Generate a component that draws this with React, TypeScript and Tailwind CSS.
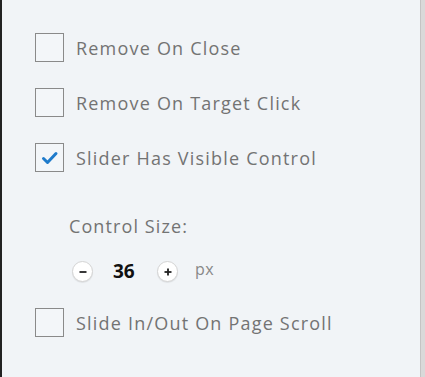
import { useState } from "react";

function Checkbox({ label, checked }: { label: string; checked?: boolean }) {
  return (
    <label className="flex items-center gap-[12px] h-[29px]">
      <span className="w-[29px] h-[29px] shrink-0 border-[1.5px] border-[#8a8a8a] bg-[#f3f6f9] flex items-center justify-center">
        {checked && (
          <svg width="18" height="16" viewBox="0 0 18 16">
            <path d="M2.5 8.5 L6.5 12.5 L15 3.5" fill="none" stroke="#1f7bcb" strokeWidth="3" strokeLinecap="round" strokeLinejoin="round" />
          </svg>
        )}
      </span>
      <span className="text-[18px] font-medium text-[#737373] tracking-[1.2px] leading-[24px]">{label}</span>
    </label>
  );
}

function RoundButton({ sign }: { sign: "-" | "+" }) {
  return (
    <button className="w-[21px] h-[21px] rounded-full bg-white border border-[#d4d4d4] shadow-[0_1px_1px_rgba(0,0,0,0.08)] flex items-center justify-center">
      <svg width="10" height="10" viewBox="0 0 10 10">
        <path d="M1.5 5 H8.5" stroke="#222" strokeWidth="1.8" />
        {sign === "+" && <path d="M5 1.5 V8.5" stroke="#222" strokeWidth="1.8" />}
      </svg>
    </button>
  );
}

export default function App() {
  const [size] = useState(36);
  return (
    <div className="w-[425px] h-[377px] flex bg-[#d9d9d9]" style={{ fontFamily: "'Open Sans', 'Liberation Sans', sans-serif" }}>
      <div className="w-[421px] h-full bg-[#f1f4f7] border-l-2 border-[#222] border-r border-r-[#c4c4c4] pl-[33px] pt-[33px] flex flex-col">
        <div className="flex flex-col gap-[26px]">
          <Checkbox label="Remove On Close" />
          <Checkbox label="Remove On Target Click" />
          <Checkbox label="Slider Has Visible Control" checked />
        </div>

        <div className="pl-[34px] mt-[44px] text-[18px] font-medium text-[#737373] tracking-[1.1px] leading-[20px]">Control Size:</div>

        <div className="pl-[37px] mt-[25px] flex items-center h-[21px]">
          <RoundButton sign="-" />
          <span className="ml-[20px] w-[27px] text-[19px] font-bold text-[#111] leading-[21px]">{size}</span>
          <span className="ml-[17px]"><RoundButton sign="+" /></span>
          <span className="ml-[17px] text-[16px] text-[#888] tracking-[0.5px] -mt-[5px]">px</span>
        </div>

        <div className="mt-[26px]">
          <Checkbox label="Slide In/Out On Page Scroll" />
        </div>
      </div>
    </div>
  );
}
